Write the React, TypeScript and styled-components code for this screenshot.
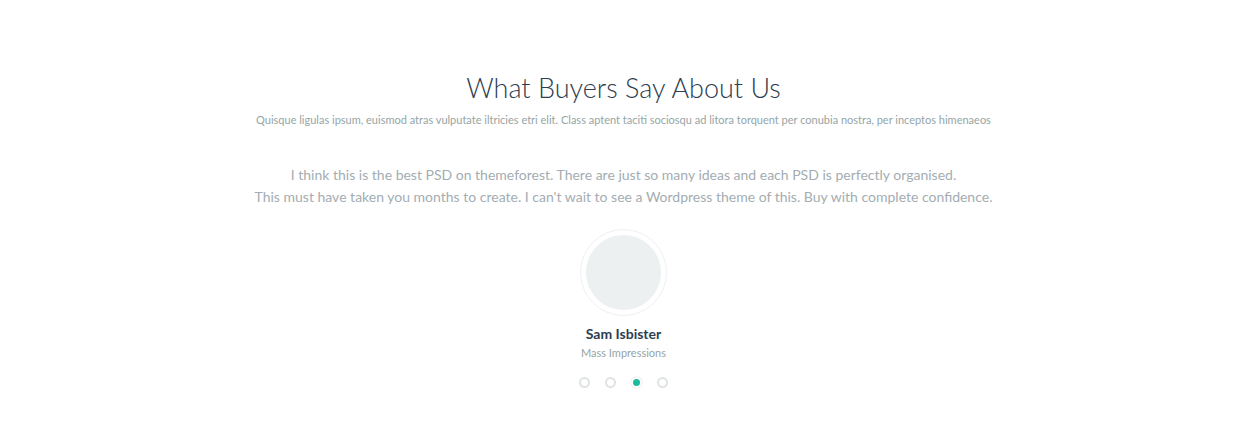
import React from "react";
import styled, { createGlobalStyle } from "styled-components";

const Global = createGlobalStyle`
  html, body { margin: 0; padding: 0; background: #fff; }
  body { font-family: Lato, "Open Sans", sans-serif; }
`;

const Section = styled.section`
  width: 1247px;
  height: 442px;
  display: flex;
  flex-direction: column;
  align-items: center;
  padding-top: 70px;
  box-sizing: border-box;
`;

const Title = styled.h2`
  margin: 0;
  font-family: Lato, sans-serif;
  font-weight: 300;
  font-size: 27px;
  line-height: 36px;
  color: #2c3e50;
`;

const Subtitle = styled.p`
  margin: 6px 0 0;
  font-size: 11px;
  line-height: 16px;
  color: #95a5a6;
`;

const Quote = styled.p`
  margin: 36px 0 0;
  font-size: 14px;
  line-height: 22px;
  color: #a3adb2;
  text-align: center;
`;

const Avatar = styled.div`
  margin-top: 21px;
  width: 87px;
  height: 87px;
  box-sizing: border-box;
  border-radius: 50%;
  border: 1px solid #eef0f1;
  display: flex;
  align-items: center;
  justify-content: center;
`;

const AvatarInner = styled.div`
  width: 75px;
  height: 75px;
  border-radius: 50%;
  background: #ecf0f1;
`;

const Name = styled.div`
  margin-top: 9px;
  font-size: 14px;
  font-weight: 700;
  line-height: 18px;
  color: #2c3e50;
`;

const Company = styled.div`
  margin-top: 2px;
  font-size: 11px;
  line-height: 16px;
  color: #95a5a6;
`;

const Dots = styled.div`
  margin-top: 16px;
  display: flex;
  gap: 15px;
`;

const Dot = styled.span<{ $active?: boolean }>`
  width: 11px;
  height: 11px;
  box-sizing: border-box;
  border-radius: 50%;
  border: 2px solid ${(p) => (p.$active ? "#fff" : "#dfe3e4")};
  background: ${(p) => (p.$active ? "#1abc9c" : "transparent")};
  box-shadow: ${(p) => (p.$active ? "0 0 0 0.5px #dfe3e4" : "none")};
`;

export default function App() {
  return (
    <>
      <Global />
      <Section>
        <Title>What Buyers Say About Us</Title>
        <Subtitle>
          Quisque ligulas ipsum, euismod atras vulputate iltricies etri elit. Class aptent taciti sociosqu ad litora torquent per conubia nostra, per inceptos himenaeos
        </Subtitle>
        <Quote>
          I think this is the best PSD on themeforest. There are just so many ideas and each PSD is perfectly organised.
          <br />
          This must have taken you months to create. I can't wait to see a Wordpress theme of this. Buy with complete confidence.
        </Quote>
        <Avatar>
          <AvatarInner />
        </Avatar>
        <Name>Sam Isbister</Name>
        <Company>Mass Impressions</Company>
        <Dots>
          {[0, 1, 2, 3].map((i) => (
            <Dot key={i} $active={i === 2} />
          ))}
        </Dots>
      </Section>
    </>
  );
}
